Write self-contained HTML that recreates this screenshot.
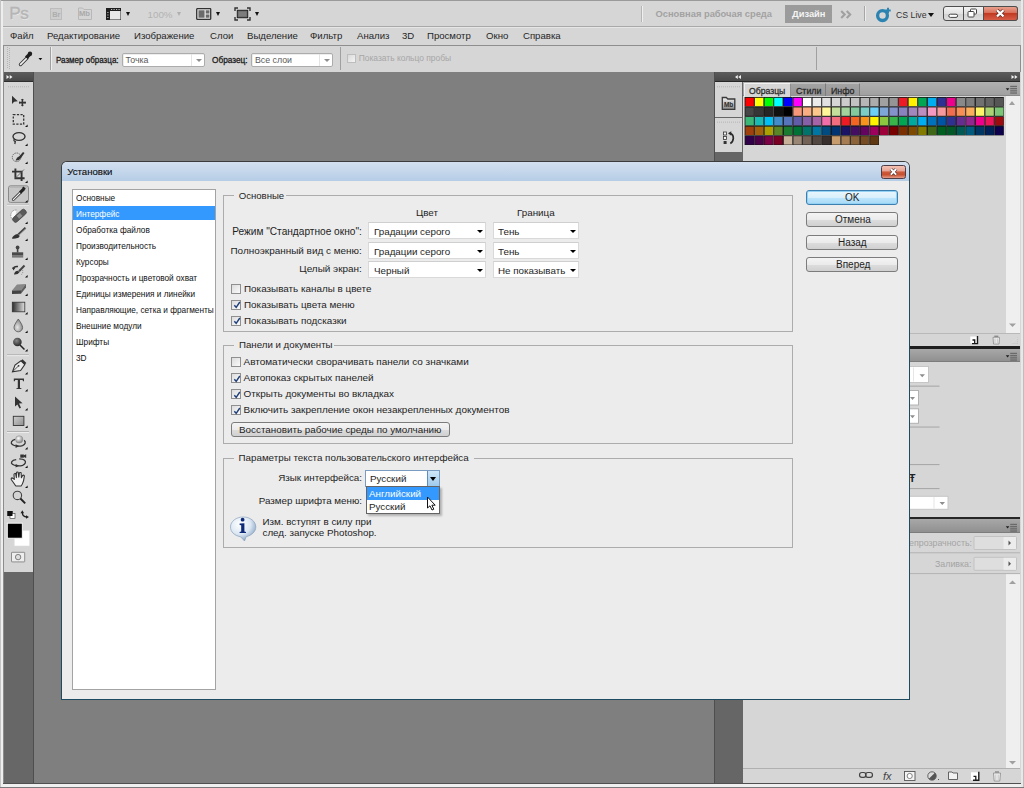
<!DOCTYPE html><html><head><meta charset="utf-8"><style>
*{margin:0;padding:0;box-sizing:border-box}
html,body{width:1024px;height:788px;overflow:hidden;background:#d6d6d6;font-family:"Liberation Sans",sans-serif;position:relative}
div{position:absolute}
.t{white-space:nowrap;line-height:1}

.grp{border:1px solid #acacac}
.dd{background:#fff;border:1px solid #d9d9d9;border-top-color:#cfcfcf}
.btn{background:linear-gradient(#f4f4f4,#ebebeb 50%,#dddddd 51%,#d0d0d0);border:1px solid #7c7c7c;border-radius:3px}
</style></head><body><div style="left:0px;top:0px;width:1024px;height:1px;background:#9a9a9a"></div>
<div style="left:0px;top:0px;width:1px;height:788px;background:#c4c4c4"></div>
<div style="left:1px;top:1px;width:2px;height:786px;background:#eeeeee"></div>
<div style="left:3px;top:45px;width:1px;height:738px;background:#8c8c8c"></div>
<div style="left:1021px;top:0px;width:3px;height:788px;background:#e8e8e8"></div>
<div style="left:1023px;top:0px;width:1px;height:788px;background:#bdbdbd"></div>
<div style="left:3px;top:26px;width:1018px;height:1px;background:#a9a9a9"></div>
<div style="left:3px;top:27px;width:1018px;height:1px;background:#e6e6e6"></div>
<div class="t" style="left:10px;top:30.6px;font-size:9.6px;color:#262626;font-weight:normal;">Файл</div>
<div class="t" style="left:47px;top:30.6px;font-size:9.6px;color:#262626;font-weight:normal;">Редактирование</div>
<div class="t" style="left:134px;top:30.6px;font-size:9.6px;color:#262626;font-weight:normal;">Изображение</div>
<div class="t" style="left:210px;top:30.6px;font-size:9.6px;color:#262626;font-weight:normal;">Слои</div>
<div class="t" style="left:247px;top:30.6px;font-size:9.6px;color:#262626;font-weight:normal;">Выделение</div>
<div class="t" style="left:310px;top:30.6px;font-size:9.6px;color:#262626;font-weight:normal;">Фильтр</div>
<div class="t" style="left:357px;top:30.6px;font-size:9.6px;color:#262626;font-weight:normal;">Анализ</div>
<div class="t" style="left:402px;top:30.6px;font-size:9.6px;color:#262626;font-weight:normal;">3D</div>
<div class="t" style="left:427px;top:30.6px;font-size:9.6px;color:#262626;font-weight:normal;">Просмотр</div>
<div class="t" style="left:486px;top:30.6px;font-size:9.6px;color:#262626;font-weight:normal;">Окно</div>
<div class="t" style="left:523px;top:30.6px;font-size:9.6px;color:#262626;font-weight:normal;">Справка</div>
<div style="left:3px;top:45px;width:1018px;height:1px;background:#8e8e8e"></div>
<div style="left:3px;top:45px;width:1px;height:27px;background:#8e8e8e"></div>
<div style="left:1020px;top:45px;width:1px;height:27px;background:#8e8e8e"></div>
<div style="left:50px;top:47px;width:1px;height:23px;background:#a0a0a0"></div>
<div style="left:51px;top:47px;width:1px;height:23px;background:#eeeeee"></div>
<div style="left:816px;top:47px;width:1px;height:23px;background:#a0a0a0"></div>
<div style="left:340px;top:47px;width:1px;height:23px;background:#a0a0a0"></div>
<div class="t" style="left:55.7px;top:55px;font-size:9.6px;color:#1a1a1a;font-weight:normal;transform:scaleX(0.835);transform-origin:0 0;-webkit-text-stroke:0.3px #1a1a1a">Размер образца:</div>
<div style="left:122px;top:52.5px;width:83px;height:14px;background:#fff;border:1px solid #acacac;border-radius:2px;box-shadow:inset 1px 1px 0 #ededed"></div>
<div style="left:190.5px;top:53.5px;width:1px;height:12px;background:#e4e4e4"></div>
<div style="left:196px;top:59.2px;width:0;height:0;border-left:3.0px solid transparent;border-right:3.0px solid transparent;border-top:3px solid #8e8e8e"></div>
<div class="t" style="left:125.5px;top:56px;font-size:8.8px;color:#5a5a5a;font-weight:normal;">Точка</div>
<div class="t" style="left:212.4px;top:55px;font-size:9.6px;color:#1a1a1a;font-weight:normal;transform:scaleX(0.86);transform-origin:0 0;-webkit-text-stroke:0.3px #1a1a1a">Образец:</div>
<div style="left:251px;top:52.5px;width:82px;height:14px;background:#fff;border:1px solid #acacac;border-radius:2px;box-shadow:inset 1px 1px 0 #ededed"></div>
<div style="left:318.5px;top:53.5px;width:1px;height:12px;background:#e4e4e4"></div>
<div style="left:324px;top:59.2px;width:0;height:0;border-left:3.0px solid transparent;border-right:3.0px solid transparent;border-top:3px solid #8e8e8e"></div>
<div class="t" style="left:255px;top:56px;font-size:8.8px;color:#5a5a5a;font-weight:normal;">Все слои</div>
<div style="left:347px;top:54px;width:9px;height:9px;background:linear-gradient(135deg,#dadada,#f4f4f4);border:1px solid #bdbdbd"></div>
<div class="t" style="left:358.7px;top:54.3px;font-size:8.45px;color:#a6a6a6;font-weight:normal;">Показать кольцо пробы</div>
<div style="left:4px;top:72px;width:30px;height:711px;background:#676767"></div>
<div style="left:33px;top:72px;width:1px;height:711px;background:#4e4e4e"></div>
<div style="left:34px;top:72px;width:680px;height:711px;background:#7f7f7f"></div>
<div style="left:714px;top:72px;width:1px;height:711px;background:#4e4e4e"></div>
<div style="left:715px;top:72px;width:28px;height:711px;background:#666666"></div>
<div style="left:3px;top:783px;width:1018px;height:1px;background:#505050"></div>
<div style="left:3px;top:784px;width:1018px;height:3px;background:#f0f0f0"></div>
<div style="left:0px;top:787px;width:1024px;height:1px;background:#7a7a7a"></div>
<div style="left:4px;top:72px;width:29px;height:10px;background:linear-gradient(#5c5c5c,#464646)"></div>
<div style="left:4px;top:81px;width:29px;height:1px;background:#2e2e2e"></div>
<div style="left:4px;top:82px;width:29px;height:490px;background:#d6d6d6"></div>
<div style="left:715px;top:72px;width:305px;height:10px;background:linear-gradient(#5c5c5c,#464646)"></div>
<div style="left:715px;top:81px;width:305px;height:1px;background:#262626"></div>
<div style="left:715px;top:82px;width:27px;height:35px;background:#d6d6d6"></div>
<div style="left:715px;top:118px;width:27px;height:34px;background:#d6d6d6"></div>
<div style="left:743px;top:82px;width:277px;height:264px;background:#d6d6d6"></div>
<div style="left:743px;top:82px;width:277px;height:14px;background:linear-gradient(#b0b0b0,#a0a0a0);border-bottom:1px solid #8a8a8a"></div>
<div style="left:744px;top:83px;width:47px;height:14px;background:#d6d6d6;border-top:1px solid #f2f2f2;border-left:1px solid #eeeeee;border-right:1px solid #8e8e8e"></div>
<div style="left:791px;top:83px;width:35px;height:13px;background:linear-gradient(#a3a3a3,#969696);border-right:1px solid #7c7c7c;border-top:1px solid #bdbdbd"></div>
<div style="left:826px;top:83px;width:34px;height:13px;background:linear-gradient(#a3a3a3,#969696);border-right:1px solid #7c7c7c;border-top:1px solid #bdbdbd"></div>
<div class="t" style="left:749px;top:85.8px;font-size:9.6px;color:#2a2a2a;font-weight:normal;transform:scaleX(0.9);transform-origin:0 0;-webkit-text-stroke:0.3px #2a2a2a">Образцы</div>
<div class="t" style="left:795.5px;top:85.8px;font-size:9.6px;color:#2a2a2a;font-weight:normal;transform:scaleX(0.92);transform-origin:0 0;-webkit-text-stroke:0.3px #2a2a2a">Стили</div>
<div class="t" style="left:831px;top:85.8px;font-size:9.6px;color:#2a2a2a;font-weight:normal;transform:scaleX(0.92);transform-origin:0 0;-webkit-text-stroke:0.3px #2a2a2a">Инфо</div>
<div style="left:1006px;top:96px;width:14px;height:237px;background:#efefef"></div>
<div style="left:743px;top:333px;width:277px;height:1px;background:#b9b9b9"></div>
<div style="left:743px;top:346px;width:277px;height:2.5px;background:#1e1e1e"></div>
<div style="left:743px;top:348.5px;width:277px;height:13.5px;background:linear-gradient(#a8a8a8,#909090);border-bottom:1px solid #7c7c7c"></div>
<div style="left:743px;top:362px;width:277px;height:155px;background:#d6d6d6"></div>
<div style="left:743px;top:517px;width:277px;height:2px;background:#262626"></div>
<div style="left:743px;top:519px;width:277px;height:14px;background:linear-gradient(#a8a8a8,#909090);border-bottom:1px solid #7c7c7c"></div>
<div style="left:743px;top:533px;width:277px;height:250px;background:#d6d6d6"></div>
<div style="left:1006px;top:574px;width:14px;height:194px;background:#efefef"></div>
<div style="left:743px;top:768px;width:277px;height:1px;background:#b0b0b0"></div>
<div class="t" style="left:9.2px;top:5px;font-size:17.2px;font-weight:normal;color:#b5b5b5;letter-spacing:-0.4px;-webkit-text-stroke:0.35px #b5b5b5;text-shadow:0.6px 0.6px 0 #e8e8e8">Ps</div>
<div style="left:50px;top:8px;width:12px;height:11.5px;background:#cdcdcd;border:1px solid #bcbcbc"></div>
<div class="t" style="left:52.2px;top:10.8px;font-size:7.5px;color:#aeaeae;font-weight:bold;">Br</div>
<svg style="position:absolute;left:77px;top:6px" width="17" height="15"><path d="M1.5 2 H5.5 L7 3.5 H14.5 V13.5 H1.5Z" fill="#d4d4d4" stroke="#b8b8b8" stroke-width="1"/></svg>
<div class="t" style="left:79.3px;top:9.5px;font-size:8px;color:#a9a9a9;font-weight:bold;transform:scaleX(0.95);transform-origin:0 0;">Mb</div>
<svg style="position:absolute;left:106px;top:8px" width="16" height="12" viewBox="0 0 16 12">
<rect x="0.5" y="0.5" width="14" height="11" fill="#fff" stroke="#1e1e1e" stroke-width="1"/>
<rect x="0" y="0" width="15" height="3" fill="#1e1e1e"/><rect x="0" y="0" width="4" height="12" fill="#1e1e1e"/>
<g fill="#bbb"><rect x="5" y="1" width="1.2" height="1"/><rect x="7.5" y="1" width="1.2" height="1"/><rect x="10" y="1" width="1.2" height="1"/><rect x="12.5" y="1" width="1.2" height="1"/>
<rect x="1.3" y="4" width="1.2" height="1"/><rect x="1.3" y="6.5" width="1.2" height="1"/><rect x="1.3" y="9" width="1.2" height="1"/></g>
<rect x="4" y="3" width="10.5" height="8.5" fill="#e8e8e8"/>
</svg>
<div style="left:125.5px;top:12px;width:0;height:0;border-left:2.8px solid transparent;border-right:2.8px solid transparent;border-top:4px solid #111"></div>
<div class="t" style="left:147.5px;top:10px;font-size:9.8px;color:#b3b3b3;font-weight:normal;">100%</div>
<div style="left:177px;top:12px;width:0;height:0;border-left:2.75px solid transparent;border-right:2.75px solid transparent;border-top:4px solid #b0b0b0"></div>
<svg style="position:absolute;left:196px;top:8px" width="16" height="12" viewBox="0 0 16 12">
<rect x="0.7" y="0.7" width="14" height="10.6" fill="#e4e4e4" stroke="#333" stroke-width="1.3" rx="0.5"/>
<rect x="2.5" y="2.3" width="6" height="7.4" fill="#6a6a6a"/>
<rect x="9.8" y="2.3" width="3.6" height="3.2" fill="#6a6a6a"/><rect x="9.8" y="6.5" width="3.6" height="3.2" fill="#6a6a6a"/>
</svg>
<div style="left:216px;top:12px;width:0;height:0;border-left:2.9px solid transparent;border-right:2.9px solid transparent;border-top:4px solid #111"></div>
<svg style="position:absolute;left:234px;top:7px" width="17" height="14" viewBox="0 0 17 14">
<path d="M1 4 V1 H4 M13 1 H16 V4 M16 10 V13 H13 M4 13 H1 V10" stroke="#333" stroke-width="1.4" fill="none"/>
<rect x="3.3" y="3.3" width="10.4" height="7.4" fill="#666" stroke="#222" stroke-width="1"/>
<rect x="4.5" y="4.5" width="8" height="5" fill="#7d7d7d"/>
</svg>
<div style="left:254.5px;top:12px;width:0;height:0;border-left:2.9px solid transparent;border-right:2.9px solid transparent;border-top:4px solid #111"></div>
<div style="left:641px;top:6px;width:1px;height:16px;background:#b5b5b5"></div>
<div style="left:642px;top:6px;width:1px;height:16px;background:#efefef"></div>
<div class="t" style="left:655.5px;top:10px;font-size:9.35px;color:#a2a2a2;font-weight:bold;">Основная рабочая среда</div>
<div style="left:785px;top:5px;width:47px;height:17.5px;background:#9b9b9b"></div>
<div class="t" style="left:792px;top:10px;font-size:9.35px;color:#f4f4f4;font-weight:bold;">Дизайн</div>
<svg style="position:absolute;left:840px;top:10px" width="13" height="9"><path d="M1.2 1 L4.7 4.5 L1.2 8 M6.7 1 L10.2 4.5 L6.7 8" stroke="#a0a0a0" stroke-width="2.1" fill="none"/></svg>
<div style="left:864px;top:6px;width:1px;height:15px;background:#a6a6a6"></div>
<div style="left:865px;top:6px;width:1px;height:15px;background:#ededed"></div>
<svg style="position:absolute;left:875px;top:7px" width="16" height="16" viewBox="0 0 16 16">
<circle cx="7.5" cy="8.6" r="4.9" fill="none" stroke="#2a83b0" stroke-width="3.3"/>
<path d="M13 0.8 V6.2 M10.3 3.5 H15.7" stroke="#2a83b0" stroke-width="1.9"/>
</svg>
<div class="t" style="left:895.5px;top:9.8px;font-size:9.8px;color:#333;font-weight:normal;transform:scaleX(0.89);transform-origin:0 0;">CS Live</div>
<div style="left:927.8px;top:13px;width:0;height:0;border-left:3.5px solid transparent;border-right:3.5px solid transparent;border-top:4px solid #111"></div>
<svg style="position:absolute;left:943px;top:6px" width="75" height="15" viewBox="0 0 75 15">
<defs>
<linearGradient id="wg" x1="0" y1="0" x2="0" y2="1"><stop offset="0" stop-color="#f4f4f4"/><stop offset="0.5" stop-color="#e2e2e2"/><stop offset="0.51" stop-color="#d2d2d2"/><stop offset="1" stop-color="#dedede"/></linearGradient>
<linearGradient id="rg" x1="0" y1="0" x2="0" y2="1"><stop offset="0" stop-color="#eaa493"/><stop offset="0.45" stop-color="#d9705a"/><stop offset="0.5" stop-color="#c23a22"/><stop offset="1" stop-color="#d8604a"/></linearGradient>
</defs>
<rect x="0.5" y="0.5" width="74" height="14" rx="2.5" fill="url(#wg)" stroke="#4e4e4e"/>
<path d="M40.5 0.5 H72 A2.5 2.5 0 0 1 74.5 3 V12 A2.5 2.5 0 0 1 72 14.5 H40.5Z" fill="url(#rg)" stroke="#4e4e4e"/>
<line x1="20.5" y1="1" x2="20.5" y2="14" stroke="#4e4e4e"/>
<rect x="5.8" y="8.2" width="8.8" height="3.2" rx="1.6" fill="#fff" stroke="#444"/>
<rect x="27.5" y="3" width="6" height="5" fill="#fff" stroke="#444" rx="0.8"/>
<rect x="25" y="5.5" width="6" height="5.5" fill="#fff" stroke="#444" rx="0.8"/>
<path d="M54 4.2 L60.5 10.4 M60.5 4.2 L54 10.4" stroke="#5a2a20" stroke-width="3.6"/>
<path d="M54 4.2 L60.5 10.4 M60.5 4.2 L54 10.4" stroke="#fff" stroke-width="2.2"/>
</svg>
<svg style="position:absolute;left:0px;top:44px" width="50" height="28" viewBox="0 0 50 28">
<g fill="#b4b4b4"><rect x="7" y="3" width="1" height="1"/><rect x="9" y="4" width="1" height="1"/><rect x="7" y="5" width="1" height="1"/><rect x="9" y="6" width="1" height="1"/><rect x="7" y="7" width="1" height="1"/><rect x="9" y="8" width="1" height="1"/><rect x="7" y="9" width="1" height="1"/><rect x="9" y="10" width="1" height="1"/><rect x="7" y="11" width="1" height="1"/><rect x="9" y="12" width="1" height="1"/><rect x="7" y="13" width="1" height="1"/><rect x="9" y="14" width="1" height="1"/><rect x="7" y="15" width="1" height="1"/><rect x="9" y="16" width="1" height="1"/><rect x="7" y="17" width="1" height="1"/><rect x="9" y="18" width="1" height="1"/><rect x="7" y="19" width="1" height="1"/><rect x="9" y="20" width="1" height="1"/><rect x="7" y="21" width="1" height="1"/><rect x="9" y="22" width="1" height="1"/><rect x="7" y="23" width="1" height="1"/><rect x="9" y="24" width="1" height="1"/></g>
<path d="M20.5 20.5 L27 14" stroke="#3a3a3a" stroke-width="3.4" stroke-linecap="round"/>
<path d="M20.6 20.4 L26.5 14.5" stroke="#f0f0f0" stroke-width="1.7" stroke-linecap="round"/>
<path d="M25 12.5 L28.8 8.7 L31.3 11.2 L27.5 15Z" fill="#1e1e1e"/>
<circle cx="30" cy="9.8" r="2.2" fill="#1e1e1e"/>
<path d="M38.5 14 L42.3 14 L40.4 16.2Z" fill="#111"/>
</svg>
<svg style="position:absolute;left:0;top:0" width="40" height="600" viewBox="0 0 40 600"><g fill="#bdbdbd"><rect x="8" y="86" width="1" height="1.4"/><rect x="10" y="86" width="1" height="1.4"/><rect x="12" y="86" width="1" height="1.4"/><rect x="14" y="86" width="1" height="1.4"/><rect x="16" y="86" width="1" height="1.4"/><rect x="18" y="86" width="1" height="1.4"/><rect x="20" y="86" width="1" height="1.4"/><rect x="22" y="86" width="1" height="1.4"/><rect x="24" y="86" width="1" height="1.4"/><rect x="26" y="86" width="1" height="1.4"/><rect x="28" y="86" width="1" height="1.4"/></g><path d="M12 95.8 L12 104 L14.2 101.8 L17.8 101.2Z" fill="#333"/><path d="M22.4 99 V106 M19 102.6 H25.8" stroke="#333" stroke-width="1.6"/><path d="M21 100 L22.4 98.8 L23.8 100Z M21 105.2 L22.4 106.4 L23.8 105.2Z M20 101.2 L18.8 102.6 L20 104Z M24.8 101.2 L26 102.6 L24.8 104Z" fill="#333"/><rect x="13.3" y="114.6" width="10.4" height="9.6" fill="none" stroke="#333" stroke-width="1.3" stroke-dasharray="2.2 1.4"/><path d="M27.6 127 V124.4 L25 127Z" fill="#111"/><ellipse cx="19" cy="136.5" rx="6" ry="3.9" fill="none" stroke="#333" stroke-width="1.4"/><path d="M14.5 139 Q13 141 15.3 141.5 L14.8 144" fill="none" stroke="#333" stroke-width="1.3"/><path d="M27.6 146 V143.4 L25 146Z" fill="#111"/><circle cx="16.6" cy="157.3" r="4.3" fill="none" stroke="#555" stroke-width="1" stroke-dasharray="1.2 1"/><path d="M15.5 160.5 Q19 161 21 158 L24.5 153 L23 152 L19.5 156 Q16.5 157 15.5 160.5Z" fill="#333"/><path d="M27.6 164 V161.4 L25 164Z" fill="#111"/><path d="M15.4 168.6 V178.2 H24.6 M12 171.6 H21.6 V181" fill="none" stroke="#333" stroke-width="1.9"/><path d="M15.5 178 L24 169.5" stroke="#555" stroke-width="0.8"/><path d="M27.6 183 V180.4 L25 183Z" fill="#111"/><rect x="8.5" y="185.8" width="20" height="16.6" rx="2" fill="#c6c6c6" stroke="#8a8a8a"/><rect x="9.5" y="186.8" width="18" height="1" fill="#b4b4b4"/><path d="M13.3 199.6 L20.5 192.4" stroke="#333" stroke-width="2.8" stroke-linecap="round"/><path d="M13.3 199.6 L20.5 192.4" stroke="#f2f2f2" stroke-width="1.3" stroke-linecap="round"/><path d="M19 191.5 L22.8 187.8 L25 190 L21.2 193.8Z M22 188 L23.5 186.5 L25.8 188.8 L24.3 190.3Z" fill="#222"/><path d="M27.6 202.5 V199.9 L25 202.5Z" fill="#111"/><rect x="7" y="203.8" width="22" height="1" fill="#b2b2b2"/><rect x="7" y="204.8" width="22" height="1" fill="#ececec"/><path d="M16.5 210 Q11 210 10.8 215.5 Q11 219.5 14.5 220" fill="#fafafa" stroke="#777" stroke-width="0.8" stroke-dasharray="1.1 0.9"/><rect x="11.5" y="213" width="16" height="5.6" rx="2.2" transform="rotate(-42 19.5 215.8)" fill="#5a5a5a" stroke="#3a3a3a" stroke-width="0.6"/><rect x="17.3" y="213.9" width="4.4" height="3.8" transform="rotate(-42 19.5 215.8)" fill="#8e8e8e"/><path d="M27.6 224 V221.4 L25 224Z" fill="#111"/><path d="M11.8 238.6 Q13.5 234.5 17.5 234 L19.8 236 Q18 239 11.8 238.6Z" fill="#333"/><path d="M18.3 234.5 L25.5 227.8" stroke="#444" stroke-width="2.2"/><path d="M19 235 L25.8 228.5" stroke="#999" stroke-width="0.8"/><path d="M27.6 241 V238.4 L25 241Z" fill="#111"/><circle cx="17.6" cy="247.4" r="1.9" fill="#444"/><rect x="16.8" y="248.5" width="1.6" height="4" fill="#444"/><rect x="12" y="252.3" width="11.2" height="3.3" fill="#4a4a4a"/><rect x="12" y="255.6" width="11.2" height="2" fill="#777"/><path d="M27.6 260 V257.4 L25 260Z" fill="#111"/><path d="M14 274.5 Q14.5 271 18 270.8 L19.5 272.3 Q18 274.8 14 274.5Z" fill="#333"/><path d="M19 271.2 L24.5 265.5" stroke="#444" stroke-width="2"/><path d="M13 269 Q14 266 18 266.5" fill="none" stroke="#333" stroke-width="1.5"/><path d="M12 267.5 L13.5 270.5 L15.2 268Z" fill="#333"/><path d="M22.5 270 Q23.5 273 21 275" fill="none" stroke="#777" stroke-width="0.8" stroke-dasharray="1 1"/><path d="M27.6 277.5 V274.9 L25 277.5Z" fill="#111"/><path d="M12 290.5 L17 284.5 L26 284 L21 290.2Z" fill="#888"/><path d="M12 290.5 L21 290.2 L21 293.7 L12 294Z" fill="#444"/><path d="M21 290.2 L26 284 L26 287.5 L21 293.7Z" fill="#5e5e5e"/><path d="M27.6 296 V293.4 L25 296Z" fill="#111"/><defs><linearGradient id="gr1" x1="0" x2="1"><stop offset="0" stop-color="#2d2d2d"/><stop offset="1" stop-color="#e0e0e0"/></linearGradient><radialGradient id="drop" cx="0.4" cy="0.65" r="0.6"><stop offset="0" stop-color="#e6e6e6"/><stop offset="1" stop-color="#8a8a8a"/></radialGradient><radialGradient id="ball" cx="0.4" cy="0.35" r="0.6"><stop offset="0" stop-color="#888"/><stop offset="1" stop-color="#2f2f2f"/></radialGradient><radialGradient id="sph" cx="0.4" cy="0.35" r="0.6"><stop offset="0" stop-color="#fff"/><stop offset="1" stop-color="#8c8c8c"/></radialGradient><linearGradient id="rectg" x1="0" y1="0" x2="1" y2="1"><stop offset="0" stop-color="#cfcfcf"/><stop offset="1" stop-color="#8f8f8f"/></linearGradient></defs><rect x="12.3" y="302.2" width="12.5" height="9.6" fill="url(#gr1)" stroke="#333" stroke-width="0.8"/><path d="M27.6 314.5 V311.9 L25 314.5Z" fill="#111"/><path d="M18.3 319 Q14 325 14 327.5 A4.3 4.3 0 0 0 22.6 327.5 Q22.6 325 18.3 319Z" fill="url(#drop)" stroke="#555" stroke-width="0.8"/><path d="M27.6 333 V330.4 L25 333Z" fill="#111"/><circle cx="17.4" cy="342" r="4.3" fill="url(#ball)"/><path d="M20 345 L24.5 349.5" stroke="#222" stroke-width="1.5"/><path d="M27.6 351.5 V348.9 L25 351.5Z" fill="#111"/><rect x="7" y="354.2" width="22" height="1" fill="#b2b2b2"/><rect x="7" y="355.2" width="22" height="1" fill="#ececec"/><path d="M12.5 371.8 L15 365 L21 360.8 L24.8 364.6 L20.6 370.6Z" fill="#eaeaea" stroke="#333" stroke-width="1.1"/><path d="M21 360.8 L22.5 359.2 L26.4 363 L24.8 364.6Z" fill="#333"/><path d="M12.8 371.5 L18.4 366" stroke="#333" stroke-width="0.8"/><circle cx="18.6" cy="365.8" r="0.9" fill="#333"/><path d="M27.6 374.5 V371.9 L25 374.5Z" fill="#111"/><path d="M13.8 378.6 H24 V381.2 H23 L22.6 380 H20 V388 L21.4 388.3 V389 H16.4 V388.3 L17.8 388 V380 H15.2 L14.8 381.2 H13.8Z" fill="#333"/><path d="M27.6 391.5 V388.9 L25 391.5Z" fill="#111"/><path d="M15 396.6 L15 406.5 L17.4 404.4 L19.5 408.5 L21 407.7 L19 403.6 L22.5 403.2Z" fill="#333"/><path d="M27.6 410.5 V407.9 L25 410.5Z" fill="#111"/><rect x="13.3" y="416.3" width="10.6" height="9.2" fill="url(#rectg)" stroke="#333" stroke-width="0.9"/><path d="M27.6 428 V425.4 L25 428Z" fill="#111"/><rect x="7" y="431" width="22" height="1" fill="#b2b2b2"/><rect x="7" y="432" width="22" height="1" fill="#ececec"/><path d="M15.3 439.3 C11.3 440.3 10.3 443 12.3 444.6 C14.5 446.3 19.5 446.7 22.5 445.6 C25.3 444.5 26.2 442.3 24.2 440.3" fill="none" stroke="#333" stroke-width="1.3"/><circle cx="19.2" cy="439.4" r="3.7" fill="url(#sph)" stroke="#8a8a8a" stroke-width="0.5"/><path d="M15.6 444.2 L19.2 446.1 L15.6 447.9Z" fill="#333"/><path d="M27.6 449.5 V446.9 L25 449.5Z" fill="#111"/><rect x="20.3" y="454.5" width="3.6" height="3.2" fill="#333"/><path d="M23.9 455.3 L26.2 454.3 V458 L23.9 457Z" fill="#333"/><path d="M16.2 459.6 C11.6 460.2 10.4 462.7 12.4 464.3 C14.6 466 19.6 466.3 22.6 465.3 C25.4 464.2 26.3 462 24.6 460.2 C23.6 459.2 21.4 458.8 19.2 458.8" fill="none" stroke="#333" stroke-width="1.3"/><path d="M15.6 463.9 L19.2 465.8 L15.6 467.6Z" fill="#333"/><path d="M27.6 468 V465.4 L25 468Z" fill="#111"/><path d="M14.6 484.3 L11.4 479.7 Q10.7 478.1 12.3 477.9 L14.3 479.4 L14 474.6 Q14.2 473.2 15.6 473.6 L16.4 477.6 L16.4 472.9 Q16.9 471.6 18.1 472.2 L18.8 477.1 L19.3 473.1 Q19.9 472 21.1 472.8 L21.4 477.7 L22.6 475.4 Q23.6 474.8 24.4 475.9 L23.6 480.6 Q22.6 484.1 21.1 486 L15.9 486Z" fill="#f0f0f0" stroke="#333" stroke-width="1.1" stroke-linejoin="round"/><path d="M27.6 488 V485.4 L25 488Z" fill="#111"/><circle cx="17.4" cy="495.4" r="4.2" fill="#d4d4d4" stroke="#444" stroke-width="1.1"/><path d="M20.4 498.5 L25.2 503.3" stroke="#222" stroke-width="1.9"/><rect x="7.5" y="511" width="5" height="5" fill="#111"/><rect x="10" y="513.5" width="5" height="5" fill="#fff" stroke="#333" stroke-width="0.6"/><rect x="7.5" y="511" width="5" height="5" fill="#111"/><path d="M22.3 512.5 Q22.5 516.8 26.8 517" fill="none" stroke="#222" stroke-width="1.3"/><path d="M20.5 513.3 L22.3 510.3 L24.1 513.3Z M26 515.2 L29 517 L26 518.8Z" fill="#222"/><rect x="14.2" y="530.3" width="15.5" height="15.7" fill="#fff" stroke="#dedede" stroke-width="0.6"/><rect x="7.3" y="523.2" width="15" height="15" fill="#000" stroke="#fff" stroke-width="0.9"/><rect x="11.5" y="552.3" width="13.2" height="9.6" rx="0.5" fill="#eee" stroke="#777" stroke-width="0.8"/><circle cx="18.1" cy="557.1" r="2.7" fill="#ddd" stroke="#666" stroke-width="0.8"/></svg>
<svg style="position:absolute;left:0;top:0" width="1024" height="160" viewBox="0 0 1024 160"><g fill="#bdbdbd"><rect x="717" y="86" width="1" height="1.4"/><rect x="717" y="121.5" width="1" height="1.4"/><rect x="719" y="86" width="1" height="1.4"/><rect x="719" y="121.5" width="1" height="1.4"/><rect x="721" y="86" width="1" height="1.4"/><rect x="721" y="121.5" width="1" height="1.4"/><rect x="723" y="86" width="1" height="1.4"/><rect x="723" y="121.5" width="1" height="1.4"/><rect x="725" y="86" width="1" height="1.4"/><rect x="725" y="121.5" width="1" height="1.4"/><rect x="727" y="86" width="1" height="1.4"/><rect x="727" y="121.5" width="1" height="1.4"/><rect x="729" y="86" width="1" height="1.4"/><rect x="729" y="121.5" width="1" height="1.4"/><rect x="731" y="86" width="1" height="1.4"/><rect x="731" y="121.5" width="1" height="1.4"/><rect x="733" y="86" width="1" height="1.4"/><rect x="733" y="121.5" width="1" height="1.4"/><rect x="735" y="86" width="1" height="1.4"/><rect x="735" y="121.5" width="1" height="1.4"/><rect x="737" y="86" width="1" height="1.4"/><rect x="737" y="121.5" width="1" height="1.4"/><rect x="739" y="86" width="1" height="1.4"/><rect x="739" y="121.5" width="1" height="1.4"/></g><defs><linearGradient id="mbg" x1="0" y1="0" x2="0" y2="1"><stop offset="0" stop-color="#f4f4f4"/><stop offset="1" stop-color="#8a8a8a"/></linearGradient></defs><path d="M722.3 97.5 H726.3 L727.8 99 H734.8 V109.3 H722.3Z" fill="url(#mbg)" stroke="#3a3a3a" stroke-width="1.3"/><rect x="723.6" y="132" width="3" height="3" fill="#f4f4f4" stroke="#333" stroke-width="0.8"/><rect x="723.6" y="136.5" width="3" height="3" fill="#f4f4f4" stroke="#333" stroke-width="0.8"/><rect x="723.6" y="141" width="3" height="3" fill="#333"/><path d="M730 133.5 Q733.5 134 733.3 138.5 Q733 142 730.3 143.5" fill="none" stroke="#2a2a2a" stroke-width="1.7"/><path d="M728 133.3 L731.3 131.2 L731.3 135.8Z" fill="#2a2a2a"/></svg>
<div class="t" style="left:723.6px;top:101.3px;font-size:7px;color:#2a2a2a;font-weight:bold;transform:scaleX(0.92);transform-origin:0 0;">Mb</div>
<svg style="position:absolute;left:0;top:0" width="1024" height="160" viewBox="0 0 1024 160"><rect x="744.60" y="97.00" width="9.60" height="9.60" fill="#161616"/><rect x="745.40" y="97.80" width="8.40" height="8.40" fill="#ff0000"/><rect x="754.20" y="97.00" width="9.60" height="9.60" fill="#161616"/><rect x="755.00" y="97.80" width="8.40" height="8.40" fill="#ffff00"/><rect x="763.80" y="97.00" width="9.60" height="9.60" fill="#161616"/><rect x="764.60" y="97.80" width="8.40" height="8.40" fill="#00ff00"/><rect x="773.40" y="97.00" width="9.60" height="9.60" fill="#161616"/><rect x="774.20" y="97.80" width="8.40" height="8.40" fill="#00ffff"/><rect x="783.00" y="97.00" width="9.60" height="9.60" fill="#161616"/><rect x="783.80" y="97.80" width="8.40" height="8.40" fill="#0000ff"/><rect x="792.60" y="97.00" width="9.60" height="9.60" fill="#161616"/><rect x="793.40" y="97.80" width="8.40" height="8.40" fill="#ff00ff"/><rect x="802.20" y="97.00" width="9.60" height="9.60" fill="#161616"/><rect x="803.00" y="97.80" width="8.40" height="8.40" fill="#ffffff"/><rect x="811.80" y="97.00" width="9.60" height="9.60" fill="#161616"/><rect x="812.60" y="97.80" width="8.40" height="8.40" fill="#ebebeb"/><rect x="821.40" y="97.00" width="9.60" height="9.60" fill="#161616"/><rect x="822.20" y="97.80" width="8.40" height="8.40" fill="#e1e1e1"/><rect x="831.00" y="97.00" width="9.60" height="9.60" fill="#161616"/><rect x="831.80" y="97.80" width="8.40" height="8.40" fill="#d6d6d6"/><rect x="840.60" y="97.00" width="9.60" height="9.60" fill="#161616"/><rect x="841.40" y="97.80" width="8.40" height="8.40" fill="#cccccc"/><rect x="850.20" y="97.00" width="9.60" height="9.60" fill="#161616"/><rect x="851.00" y="97.80" width="8.40" height="8.40" fill="#c2c2c2"/><rect x="859.80" y="97.00" width="9.60" height="9.60" fill="#161616"/><rect x="860.60" y="97.80" width="8.40" height="8.40" fill="#b7b7b7"/><rect x="869.40" y="97.00" width="9.60" height="9.60" fill="#161616"/><rect x="870.20" y="97.80" width="8.40" height="8.40" fill="#acacac"/><rect x="879.00" y="97.00" width="9.60" height="9.60" fill="#161616"/><rect x="879.80" y="97.80" width="8.40" height="8.40" fill="#a1a1a1"/><rect x="888.60" y="97.00" width="9.60" height="9.60" fill="#161616"/><rect x="889.40" y="97.80" width="8.40" height="8.40" fill="#959595"/><rect x="898.20" y="97.00" width="9.60" height="9.60" fill="#161616"/><rect x="899.00" y="97.80" width="8.40" height="8.40" fill="#ed1c24"/><rect x="907.80" y="97.00" width="9.60" height="9.60" fill="#161616"/><rect x="908.60" y="97.80" width="8.40" height="8.40" fill="#fff200"/><rect x="917.40" y="97.00" width="9.60" height="9.60" fill="#161616"/><rect x="918.20" y="97.80" width="8.40" height="8.40" fill="#00a651"/><rect x="927.00" y="97.00" width="9.60" height="9.60" fill="#161616"/><rect x="927.80" y="97.80" width="8.40" height="8.40" fill="#00aeef"/><rect x="936.60" y="97.00" width="9.60" height="9.60" fill="#161616"/><rect x="937.40" y="97.80" width="8.40" height="8.40" fill="#2e3192"/><rect x="946.20" y="97.00" width="9.60" height="9.60" fill="#161616"/><rect x="947.00" y="97.80" width="8.40" height="8.40" fill="#ec008c"/><rect x="955.80" y="97.00" width="9.60" height="9.60" fill="#161616"/><rect x="956.60" y="97.80" width="8.40" height="8.40" fill="#898989"/><rect x="965.40" y="97.00" width="9.60" height="9.60" fill="#161616"/><rect x="966.20" y="97.80" width="8.40" height="8.40" fill="#7d7d7d"/><rect x="975.00" y="97.00" width="9.60" height="9.60" fill="#161616"/><rect x="975.80" y="97.80" width="8.40" height="8.40" fill="#707070"/><rect x="984.60" y="97.00" width="9.60" height="9.60" fill="#161616"/><rect x="985.40" y="97.80" width="8.40" height="8.40" fill="#636363"/><rect x="994.20" y="97.00" width="9.60" height="9.60" fill="#161616"/><rect x="995.00" y="97.80" width="8.40" height="8.40" fill="#555555"/><rect x="744.60" y="106.60" width="9.60" height="9.60" fill="#161616"/><rect x="745.40" y="107.40" width="8.40" height="8.40" fill="#464646"/><rect x="754.20" y="106.60" width="9.60" height="9.60" fill="#161616"/><rect x="755.00" y="107.40" width="8.40" height="8.40" fill="#363636"/><rect x="763.80" y="106.60" width="9.60" height="9.60" fill="#161616"/><rect x="764.60" y="107.40" width="8.40" height="8.40" fill="#262626"/><rect x="773.40" y="106.60" width="9.60" height="9.60" fill="#161616"/><rect x="774.20" y="107.40" width="8.40" height="8.40" fill="#111111"/><rect x="783.00" y="106.60" width="9.60" height="9.60" fill="#161616"/><rect x="783.80" y="107.40" width="8.40" height="8.40" fill="#000000"/><rect x="792.60" y="106.60" width="9.60" height="9.60" fill="#161616"/><rect x="793.40" y="107.40" width="8.40" height="8.40" fill="#f7977a"/><rect x="802.20" y="106.60" width="9.60" height="9.60" fill="#161616"/><rect x="803.00" y="107.40" width="8.40" height="8.40" fill="#f9ad81"/><rect x="811.80" y="106.60" width="9.60" height="9.60" fill="#161616"/><rect x="812.60" y="107.40" width="8.40" height="8.40" fill="#fdc68a"/><rect x="821.40" y="106.60" width="9.60" height="9.60" fill="#161616"/><rect x="822.20" y="107.40" width="8.40" height="8.40" fill="#fff79a"/><rect x="831.00" y="106.60" width="9.60" height="9.60" fill="#161616"/><rect x="831.80" y="107.40" width="8.40" height="8.40" fill="#c4df9b"/><rect x="840.60" y="106.60" width="9.60" height="9.60" fill="#161616"/><rect x="841.40" y="107.40" width="8.40" height="8.40" fill="#a3d39c"/><rect x="850.20" y="106.60" width="9.60" height="9.60" fill="#161616"/><rect x="851.00" y="107.40" width="8.40" height="8.40" fill="#82ca9d"/><rect x="859.80" y="106.60" width="9.60" height="9.60" fill="#161616"/><rect x="860.60" y="107.40" width="8.40" height="8.40" fill="#7bcdc8"/><rect x="869.40" y="106.60" width="9.60" height="9.60" fill="#161616"/><rect x="870.20" y="107.40" width="8.40" height="8.40" fill="#6ecff6"/><rect x="879.00" y="106.60" width="9.60" height="9.60" fill="#161616"/><rect x="879.80" y="107.40" width="8.40" height="8.40" fill="#7ea7d8"/><rect x="888.60" y="106.60" width="9.60" height="9.60" fill="#161616"/><rect x="889.40" y="107.40" width="8.40" height="8.40" fill="#8493ca"/><rect x="898.20" y="106.60" width="9.60" height="9.60" fill="#161616"/><rect x="899.00" y="107.40" width="8.40" height="8.40" fill="#8882be"/><rect x="907.80" y="106.60" width="9.60" height="9.60" fill="#161616"/><rect x="908.60" y="107.40" width="8.40" height="8.40" fill="#a187be"/><rect x="917.40" y="106.60" width="9.60" height="9.60" fill="#161616"/><rect x="918.20" y="107.40" width="8.40" height="8.40" fill="#bc8dbf"/><rect x="927.00" y="106.60" width="9.60" height="9.60" fill="#161616"/><rect x="927.80" y="107.40" width="8.40" height="8.40" fill="#f49ac2"/><rect x="936.60" y="106.60" width="9.60" height="9.60" fill="#161616"/><rect x="937.40" y="107.40" width="8.40" height="8.40" fill="#f6989d"/><rect x="946.20" y="106.60" width="9.60" height="9.60" fill="#161616"/><rect x="947.00" y="107.40" width="8.40" height="8.40" fill="#f26c4f"/><rect x="955.80" y="106.60" width="9.60" height="9.60" fill="#161616"/><rect x="956.60" y="107.40" width="8.40" height="8.40" fill="#f68e55"/><rect x="965.40" y="106.60" width="9.60" height="9.60" fill="#161616"/><rect x="966.20" y="107.40" width="8.40" height="8.40" fill="#fbaf5c"/><rect x="975.00" y="106.60" width="9.60" height="9.60" fill="#161616"/><rect x="975.80" y="107.40" width="8.40" height="8.40" fill="#fff467"/><rect x="984.60" y="106.60" width="9.60" height="9.60" fill="#161616"/><rect x="985.40" y="107.40" width="8.40" height="8.40" fill="#acd372"/><rect x="994.20" y="106.60" width="9.60" height="9.60" fill="#161616"/><rect x="995.00" y="107.40" width="8.40" height="8.40" fill="#7cc576"/><rect x="744.60" y="116.20" width="9.60" height="9.60" fill="#161616"/><rect x="745.40" y="117.00" width="8.40" height="8.40" fill="#3bb878"/><rect x="754.20" y="116.20" width="9.60" height="9.60" fill="#161616"/><rect x="755.00" y="117.00" width="8.40" height="8.40" fill="#1abbb4"/><rect x="763.80" y="116.20" width="9.60" height="9.60" fill="#161616"/><rect x="764.60" y="117.00" width="8.40" height="8.40" fill="#00bff3"/><rect x="773.40" y="116.20" width="9.60" height="9.60" fill="#161616"/><rect x="774.20" y="117.00" width="8.40" height="8.40" fill="#438cca"/><rect x="783.00" y="116.20" width="9.60" height="9.60" fill="#161616"/><rect x="783.80" y="117.00" width="8.40" height="8.40" fill="#5574b9"/><rect x="792.60" y="116.20" width="9.60" height="9.60" fill="#161616"/><rect x="793.40" y="117.00" width="8.40" height="8.40" fill="#605ca8"/><rect x="802.20" y="116.20" width="9.60" height="9.60" fill="#161616"/><rect x="803.00" y="117.00" width="8.40" height="8.40" fill="#855fa8"/><rect x="811.80" y="116.20" width="9.60" height="9.60" fill="#161616"/><rect x="812.60" y="117.00" width="8.40" height="8.40" fill="#a763a8"/><rect x="821.40" y="116.20" width="9.60" height="9.60" fill="#161616"/><rect x="822.20" y="117.00" width="8.40" height="8.40" fill="#f06eaa"/><rect x="831.00" y="116.20" width="9.60" height="9.60" fill="#161616"/><rect x="831.80" y="117.00" width="8.40" height="8.40" fill="#f26d7d"/><rect x="840.60" y="116.20" width="9.60" height="9.60" fill="#161616"/><rect x="841.40" y="117.00" width="8.40" height="8.40" fill="#ed1c24"/><rect x="850.20" y="116.20" width="9.60" height="9.60" fill="#161616"/><rect x="851.00" y="117.00" width="8.40" height="8.40" fill="#f26522"/><rect x="859.80" y="116.20" width="9.60" height="9.60" fill="#161616"/><rect x="860.60" y="117.00" width="8.40" height="8.40" fill="#f7941d"/><rect x="869.40" y="116.20" width="9.60" height="9.60" fill="#161616"/><rect x="870.20" y="117.00" width="8.40" height="8.40" fill="#fff200"/><rect x="879.00" y="116.20" width="9.60" height="9.60" fill="#161616"/><rect x="879.80" y="117.00" width="8.40" height="8.40" fill="#8dc63f"/><rect x="888.60" y="116.20" width="9.60" height="9.60" fill="#161616"/><rect x="889.40" y="117.00" width="8.40" height="8.40" fill="#39b54a"/><rect x="898.20" y="116.20" width="9.60" height="9.60" fill="#161616"/><rect x="899.00" y="117.00" width="8.40" height="8.40" fill="#00a651"/><rect x="907.80" y="116.20" width="9.60" height="9.60" fill="#161616"/><rect x="908.60" y="117.00" width="8.40" height="8.40" fill="#00a99d"/><rect x="917.40" y="116.20" width="9.60" height="9.60" fill="#161616"/><rect x="918.20" y="117.00" width="8.40" height="8.40" fill="#00aeef"/><rect x="927.00" y="116.20" width="9.60" height="9.60" fill="#161616"/><rect x="927.80" y="117.00" width="8.40" height="8.40" fill="#0072bc"/><rect x="936.60" y="116.20" width="9.60" height="9.60" fill="#161616"/><rect x="937.40" y="117.00" width="8.40" height="8.40" fill="#0054a6"/><rect x="946.20" y="116.20" width="9.60" height="9.60" fill="#161616"/><rect x="947.00" y="117.00" width="8.40" height="8.40" fill="#2e3192"/><rect x="955.80" y="116.20" width="9.60" height="9.60" fill="#161616"/><rect x="956.60" y="117.00" width="8.40" height="8.40" fill="#662d91"/><rect x="965.40" y="116.20" width="9.60" height="9.60" fill="#161616"/><rect x="966.20" y="117.00" width="8.40" height="8.40" fill="#92278f"/><rect x="975.00" y="116.20" width="9.60" height="9.60" fill="#161616"/><rect x="975.80" y="117.00" width="8.40" height="8.40" fill="#ec008c"/><rect x="984.60" y="116.20" width="9.60" height="9.60" fill="#161616"/><rect x="985.40" y="117.00" width="8.40" height="8.40" fill="#ed145b"/><rect x="994.20" y="116.20" width="9.60" height="9.60" fill="#161616"/><rect x="995.00" y="117.00" width="8.40" height="8.40" fill="#9e0b0f"/><rect x="744.60" y="125.80" width="9.60" height="9.60" fill="#161616"/><rect x="745.40" y="126.60" width="8.40" height="8.40" fill="#a0410d"/><rect x="754.20" y="125.80" width="9.60" height="9.60" fill="#161616"/><rect x="755.00" y="126.60" width="8.40" height="8.40" fill="#a36209"/><rect x="763.80" y="125.80" width="9.60" height="9.60" fill="#161616"/><rect x="764.60" y="126.60" width="8.40" height="8.40" fill="#aba000"/><rect x="773.40" y="125.80" width="9.60" height="9.60" fill="#161616"/><rect x="774.20" y="126.60" width="8.40" height="8.40" fill="#598527"/><rect x="783.00" y="125.80" width="9.60" height="9.60" fill="#161616"/><rect x="783.80" y="126.60" width="8.40" height="8.40" fill="#1a7b30"/><rect x="792.60" y="125.80" width="9.60" height="9.60" fill="#161616"/><rect x="793.40" y="126.60" width="8.40" height="8.40" fill="#007236"/><rect x="802.20" y="125.80" width="9.60" height="9.60" fill="#161616"/><rect x="803.00" y="126.60" width="8.40" height="8.40" fill="#00746b"/><rect x="811.80" y="125.80" width="9.60" height="9.60" fill="#161616"/><rect x="812.60" y="126.60" width="8.40" height="8.40" fill="#0076a3"/><rect x="821.40" y="125.80" width="9.60" height="9.60" fill="#161616"/><rect x="822.20" y="126.60" width="8.40" height="8.40" fill="#004b80"/><rect x="831.00" y="125.80" width="9.60" height="9.60" fill="#161616"/><rect x="831.80" y="126.60" width="8.40" height="8.40" fill="#003471"/><rect x="840.60" y="125.80" width="9.60" height="9.60" fill="#161616"/><rect x="841.40" y="126.60" width="8.40" height="8.40" fill="#1b1464"/><rect x="850.20" y="125.80" width="9.60" height="9.60" fill="#161616"/><rect x="851.00" y="126.60" width="8.40" height="8.40" fill="#440e62"/><rect x="859.80" y="125.80" width="9.60" height="9.60" fill="#161616"/><rect x="860.60" y="126.60" width="8.40" height="8.40" fill="#630460"/><rect x="869.40" y="125.80" width="9.60" height="9.60" fill="#161616"/><rect x="870.20" y="126.60" width="8.40" height="8.40" fill="#9e005d"/><rect x="879.00" y="125.80" width="9.60" height="9.60" fill="#161616"/><rect x="879.80" y="126.60" width="8.40" height="8.40" fill="#9e0039"/><rect x="888.60" y="125.80" width="9.60" height="9.60" fill="#161616"/><rect x="889.40" y="126.60" width="8.40" height="8.40" fill="#790000"/><rect x="898.20" y="125.80" width="9.60" height="9.60" fill="#161616"/><rect x="899.00" y="126.60" width="8.40" height="8.40" fill="#7b2e00"/><rect x="907.80" y="125.80" width="9.60" height="9.60" fill="#161616"/><rect x="908.60" y="126.60" width="8.40" height="8.40" fill="#7d4900"/><rect x="917.40" y="125.80" width="9.60" height="9.60" fill="#161616"/><rect x="918.20" y="126.60" width="8.40" height="8.40" fill="#827b00"/><rect x="927.00" y="125.80" width="9.60" height="9.60" fill="#161616"/><rect x="927.80" y="126.60" width="8.40" height="8.40" fill="#406618"/><rect x="936.60" y="125.80" width="9.60" height="9.60" fill="#161616"/><rect x="937.40" y="126.60" width="8.40" height="8.40" fill="#005e20"/><rect x="946.20" y="125.80" width="9.60" height="9.60" fill="#161616"/><rect x="947.00" y="126.60" width="8.40" height="8.40" fill="#005826"/><rect x="955.80" y="125.80" width="9.60" height="9.60" fill="#161616"/><rect x="956.60" y="126.60" width="8.40" height="8.40" fill="#005952"/><rect x="965.40" y="125.80" width="9.60" height="9.60" fill="#161616"/><rect x="966.20" y="126.60" width="8.40" height="8.40" fill="#005b7f"/><rect x="975.00" y="125.80" width="9.60" height="9.60" fill="#161616"/><rect x="975.80" y="126.60" width="8.40" height="8.40" fill="#003663"/><rect x="984.60" y="125.80" width="9.60" height="9.60" fill="#161616"/><rect x="985.40" y="126.60" width="8.40" height="8.40" fill="#002157"/><rect x="994.20" y="125.80" width="9.60" height="9.60" fill="#161616"/><rect x="995.00" y="126.60" width="8.40" height="8.40" fill="#0d004c"/><rect x="744.60" y="135.40" width="9.60" height="9.60" fill="#161616"/><rect x="745.40" y="136.20" width="8.40" height="8.40" fill="#32004b"/><rect x="754.20" y="135.40" width="9.60" height="9.60" fill="#161616"/><rect x="755.00" y="136.20" width="8.40" height="8.40" fill="#4b0049"/><rect x="763.80" y="135.40" width="9.60" height="9.60" fill="#161616"/><rect x="764.60" y="136.20" width="8.40" height="8.40" fill="#7b0046"/><rect x="773.40" y="135.40" width="9.60" height="9.60" fill="#161616"/><rect x="774.20" y="136.20" width="8.40" height="8.40" fill="#7a0026"/><rect x="783.00" y="135.40" width="9.60" height="9.60" fill="#161616"/><rect x="783.80" y="136.20" width="8.40" height="8.40" fill="#c7b299"/><rect x="792.60" y="135.40" width="9.60" height="9.60" fill="#161616"/><rect x="793.40" y="136.20" width="8.40" height="8.40" fill="#998675"/><rect x="802.20" y="135.40" width="9.60" height="9.60" fill="#161616"/><rect x="803.00" y="136.20" width="8.40" height="8.40" fill="#736357"/><rect x="811.80" y="135.40" width="9.60" height="9.60" fill="#161616"/><rect x="812.60" y="136.20" width="8.40" height="8.40" fill="#534741"/><rect x="821.40" y="135.40" width="9.60" height="9.60" fill="#161616"/><rect x="822.20" y="136.20" width="8.40" height="8.40" fill="#362f2d"/><rect x="831.00" y="135.40" width="9.60" height="9.60" fill="#161616"/><rect x="831.80" y="136.20" width="8.40" height="8.40" fill="#c69c6d"/><rect x="840.60" y="135.40" width="9.60" height="9.60" fill="#161616"/><rect x="841.40" y="136.20" width="8.40" height="8.40" fill="#a67c52"/><rect x="850.20" y="135.40" width="9.60" height="9.60" fill="#161616"/><rect x="851.00" y="136.20" width="8.40" height="8.40" fill="#8c6239"/><rect x="859.80" y="135.40" width="9.60" height="9.60" fill="#161616"/><rect x="860.60" y="136.20" width="8.40" height="8.40" fill="#754c24"/><rect x="869.40" y="135.40" width="9.60" height="9.60" fill="#161616"/><rect x="870.20" y="136.20" width="8.40" height="8.40" fill="#603913"/></svg>
<svg style="position:absolute;left:1000px;top:84px" width="20" height="12"><path d="M5.8 4.3 H9.4 L7.6 6.6Z" fill="#1e1e1e"/><g fill="#6a6a6a"><rect x="10.2" y="1.8" width="6.8" height="1.3"/><rect x="10.2" y="4" width="6.8" height="1.3"/><rect x="10.2" y="6.2" width="6.8" height="1.3"/><rect x="10.2" y="8.4" width="6.8" height="1.3"/></g></svg>
<div style="left:1009px;top:101px;width:0;height:0;border-left:3.5px solid transparent;border-right:3.5px solid transparent;border-bottom:4px solid #a0a0a0;border-top:0"></div>
<svg style="position:absolute;left:0;top:0" width="1024" height="788" viewBox="0 0 1024 788"><path d="M6.5 75.1 L9.3 77.1 L6.5 79.1Z M9.7 75.1 L12.5 77.1 L9.7 79.1Z" fill="#f0f0f0"/><path d="M737.8 75.1 L735 77.1 L737.8 79.1Z M741 75.1 L738.2 77.1 L741 79.1Z" fill="#f0f0f0"/><path d="M1011.5 75.1 L1014.3 77.1 L1011.5 79.1Z M1014.7 75.1 L1017.5 77.1 L1014.7 79.1Z" fill="#f0f0f0"/><path d="M970.3 336.5 H977.3 V343.3 H970.3Z" fill="#fff"/><path d="M977.5 336 V343.6 H972" fill="none" stroke="#1a1a1a" stroke-width="1.4"/><path d="M972.5 340 H974.7 V343" fill="none" stroke="#1a1a1a" stroke-width="1.3"/><path d="M993 337.3 H999.5 L999 344 H993.5Z" fill="#eeeeee" stroke="#8a8a8a" stroke-width="0.8"/><rect x="994.3" y="335.6" width="4" height="1.4" fill="#8a8a8a"/><path d="M995 338.5 V343 M997.3 338.5 V343" stroke="#aaa" stroke-width="0.6"/><path d="M1011 344 L1018 337 V344Z" fill="#c6c6c6"/><path d="M1012 343.5 L1017.5 338 M1014 343.5 L1017.5 340 M1016 343.5 L1017.5 342" stroke="#f0f0f0" stroke-width="0.7"/><path d="M1009 323.5 H1016 L1012.5 327Z" fill="#a0a0a0"/><path d="M1005.8 355.3 H1009.4 L1007.6 357.6Z" fill="#1e1e1e"/><g fill="#6a6a6a"><rect x="1010.2" y="352.8" width="6.8" height="1.3"/><rect x="1010.2" y="355" width="6.8" height="1.3"/><rect x="1010.2" y="357.2" width="6.8" height="1.3"/><rect x="1010.2" y="359.4" width="6.8" height="1.3"/></g><path d="M1005.8 526.3 H1009.4 L1007.6 528.6Z" fill="#1e1e1e"/><g fill="#6a6a6a"><rect x="1010.2" y="523.8" width="6.8" height="1.3"/><rect x="1010.2" y="526" width="6.8" height="1.3"/><rect x="1010.2" y="528.2" width="6.8" height="1.3"/><rect x="1010.2" y="530.4" width="6.8" height="1.3"/></g><rect x="905" y="366.5" width="23.5" height="16" fill="#fff" stroke="#c6c6c6" stroke-width="1"/><rect x="913" y="367.5" width="1" height="14" fill="#e6e6e6"/><path d="M919.5 374.3 H925 L922.25 377.3Z" fill="#8e8e8e"/><rect x="905" y="385.6" width="34.5" height="1.1" fill="#a9a9a9"/><rect x="905" y="390.5" width="13.5" height="14.5" fill="#fff" stroke="#b2b2b2" stroke-width="1"/><path d="M910 397 H915 L912.5 400Z" fill="#8e8e8e"/><rect x="905" y="408.8" width="13.5" height="14.5" fill="#fff" stroke="#b2b2b2" stroke-width="1"/><path d="M910 415.3 H915 L912.5 418.3Z" fill="#8e8e8e"/><rect x="905" y="426.5" width="34.5" height="1.1" fill="#a9a9a9"/><rect x="905" y="464" width="34.5" height="1.1" fill="#a9a9a9"/><rect x="905" y="488" width="34.5" height="1.1" fill="#a9a9a9"/><rect x="905" y="496.3" width="43" height="13" fill="#fff" stroke="#c6c6c6" stroke-width="1"/><rect x="933.5" y="497" width="1" height="11.5" fill="#e6e6e6"/><path d="M939.5 502 H945 L942.25 505Z" fill="#8e8e8e"/><rect x="743" y="552.2" width="277" height="1.1" fill="#b6b6b6"/><rect x="743" y="573" width="277" height="1.1" fill="#b6b6b6"/><rect x="974" y="536.5" width="42.5" height="13" rx="1" fill="#dedede" stroke="#c2c2c2" stroke-width="1"/><rect x="1003.5" y="537.0" width="12.5" height="12" fill="#ececec"/><path d="M1008.5 540.5 L1011 543.0 L1008.5 545.5Z" fill="#555"/><rect x="974" y="557.3" width="42.5" height="13" rx="1" fill="#dedede" stroke="#c2c2c2" stroke-width="1"/><rect x="1003.5" y="557.8" width="12.5" height="12" fill="#ececec"/><path d="M1008.5 561.3 L1011 563.8 L1008.5 566.3Z" fill="#555"/><path d="M1009 584 H1016 L1012.5 580.5Z" fill="#a0a0a0"/><path d="M1009 761 H1016 L1012.5 764.5Z" fill="#a0a0a0"/><g fill="none" stroke="#444" stroke-width="1.2"><rect x="859.5" y="772.5" width="6.5" height="4.8" rx="2.4"/><rect x="865.5" y="772.5" width="7" height="4.8" rx="2.4"/></g><rect x="904.5" y="771.5" width="10.5" height="9" fill="#f4f4f4" stroke="#555" stroke-width="0.9"/><circle cx="909.7" cy="776" r="2.6" fill="#fff" stroke="#666" stroke-width="0.8"/><circle cx="932" cy="776" r="4.2" fill="#ddd" stroke="#555" stroke-width="0.9"/><path d="M928.8 778.8 L935 772.8 A4.2 4.2 0 0 1 928.8 778.8Z" fill="#555"/><rect x="938" y="779" width="1" height="1" fill="#555"/><path d="M948.5 772 H952 L953 773 H957.5 V779.5 H948.5Z" fill="#f2f2f2" stroke="#555" stroke-width="0.9"/><path d="M971 772.3 H978.6 V780 H971Z" fill="#fff"/><path d="M978.8 771.8 V780.3 H973" fill="none" stroke="#1a1a1a" stroke-width="1.4"/><path d="M973.5 776.3 H975.8 V780" fill="none" stroke="#1a1a1a" stroke-width="1.3"/><path d="M993.5 773 H1000.5 L999.8 781 H994.2Z" fill="#eeeeee" stroke="#8a8a8a" stroke-width="0.8"/><rect x="995" y="771.3" width="4" height="1.4" fill="#8a8a8a"/><path d="M995.8 774.5 V780 M998.2 774.5 V780" stroke="#aaa" stroke-width="0.6"/></svg>
<div class="t" style="left:883px;top:770.5px;font-size:11px;color:#444;font-weight:normal;font-family:"Liberation Serif",serif"><i>fx</i></div>
<div class="t" style="left:909px;top:473px;font-size:10.5px;color:#222;font-weight:bold;font-family:"Liberation Serif",serif">&#358;</div>
<div class="t" style="right:52.3px;top:537.5px;font-size:9.8px;color:#a4a4a4;transform:scaleX(0.9);transform-origin:100% 0">Непрозрачность:</div>
<div class="t" style="right:52.3px;top:558.5px;font-size:9.8px;color:#a4a4a4;transform:scaleX(0.9);transform-origin:100% 0">Заливка:</div>
<div style="left:61px;top:161px;width:849px;height:539px;background:linear-gradient(#3c3c3c,#1f4b60 30px);border-radius:6px 6px 0 0"></div>
<div style="left:62px;top:162px;width:847px;height:537px;background:#ececec;border-radius:5px 5px 0 0"></div>
<div style="left:62px;top:162px;width:847px;height:19px;background:linear-gradient(#d3e0ef,#b6cde7);border-radius:5px 5px 0 0"></div>
<div class="t" style="left:67.3px;top:166.8px;font-size:9.6px;color:#111;font-weight:normal;-webkit-text-stroke:0.15px #111">Установки</div>
<div style="left:881px;top:165px;width:25px;height:14px;background:linear-gradient(#f3c1b3,#e9a595 40%,#cd5a3e 50%,#c8502f 72%,#e49a88);border:1px solid #4e3c46;border-radius:2.5px"></div>
<svg style="position:absolute;left:881px;top:165px" width="25" height="14"><path d="M9.8 4 L15.2 9.6 M15.2 4 L9.8 9.6" stroke="#4a2c2c" stroke-width="3.2"/><path d="M9.8 4 L15.2 9.6 M15.2 4 L9.8 9.6" stroke="#fff" stroke-width="1.9"/></svg>
<div style="left:72px;top:189px;width:144px;height:501px;background:#fff;border:1px solid #a3a3a3"></div>
<div style="left:73px;top:206px;width:142px;height:14px;background:#3399ff"></div>
<div class="t" style="left:76px;top:193px;font-size:9.6px;color:#111;font-weight:normal;transform:scaleX(0.86);transform-origin:0 0;">Основные</div>
<div class="t" style="left:76px;top:209px;font-size:9.6px;color:#fff;font-weight:normal;transform:scaleX(0.86);transform-origin:0 0;">Интерфейс</div>
<div class="t" style="left:76px;top:225px;font-size:9.6px;color:#111;font-weight:normal;transform:scaleX(0.86);transform-origin:0 0;">Обработка файлов</div>
<div class="t" style="left:76px;top:241px;font-size:9.6px;color:#111;font-weight:normal;transform:scaleX(0.86);transform-origin:0 0;">Производительность</div>
<div class="t" style="left:76px;top:257px;font-size:9.6px;color:#111;font-weight:normal;transform:scaleX(0.86);transform-origin:0 0;">Курсоры</div>
<div class="t" style="left:76px;top:273px;font-size:9.6px;color:#111;font-weight:normal;transform:scaleX(0.86);transform-origin:0 0;">Прозрачность и цветовой охват</div>
<div class="t" style="left:76px;top:289px;font-size:9.6px;color:#111;font-weight:normal;transform:scaleX(0.86);transform-origin:0 0;">Единицы измерения и линейки</div>
<div class="t" style="left:76px;top:305px;font-size:9.6px;color:#111;font-weight:normal;transform:scaleX(0.86);transform-origin:0 0;">Направляющие, сетка и фрагменты</div>
<div class="t" style="left:76px;top:321px;font-size:9.6px;color:#111;font-weight:normal;transform:scaleX(0.86);transform-origin:0 0;">Внешние модули</div>
<div class="t" style="left:76px;top:337px;font-size:9.6px;color:#111;font-weight:normal;transform:scaleX(0.86);transform-origin:0 0;">Шрифты</div>
<div class="t" style="left:76px;top:353px;font-size:9.6px;color:#111;font-weight:normal;transform:scaleX(0.86);transform-origin:0 0;">3D</div>
<div class="grp" style="left:223px;top:195px;width:570px;height:137px;"></div>
<div style="left:234px;top:190px;width:52px;height:10px;background:#ececec"></div>
<div class="t" style="left:238.7px;top:190.6px;font-size:9.6px;color:#1e1e1e;font-weight:normal;">Основные</div>
<div class="t" style="left:416px;top:208px;font-size:9.8px;color:#1e1e1e;font-weight:normal;">Цвет</div>
<div class="t" style="left:517px;top:208px;font-size:9.8px;color:#1e1e1e;font-weight:normal;">Граница</div>
<div class="t" style="right:662.2px;top:227px;font-size:10.15px;color:#1e1e1e">Режим "Стандартное окно":</div>
<div class="dd" style="left:368px;top:222px;width:118px;height:17px;"></div>
<div class="t" style="left:374px;top:227px;font-size:9.8px;color:#1e1e1e;font-weight:normal;">Градации серого</div>
<div class="dd" style="left:493px;top:222px;width:86px;height:17px;"></div>
<div class="t" style="left:498px;top:227px;font-size:9.8px;color:#1e1e1e;font-weight:normal;">Тень</div>
<div style="left:476.5px;top:230px;width:0;height:0;border-left:3px solid transparent;border-right:3px solid transparent;border-top:3.6px solid #000"></div>
<div style="left:569.5px;top:230px;width:0;height:0;border-left:3px solid transparent;border-right:3px solid transparent;border-top:3.6px solid #000"></div>
<div class="t" style="right:662.2px;top:245.5px;font-size:9.95px;color:#1e1e1e">Полноэкранный вид с меню:</div>
<div class="dd" style="left:368px;top:242px;width:118px;height:17px;"></div>
<div class="t" style="left:374px;top:247px;font-size:9.8px;color:#1e1e1e;font-weight:normal;">Градации серого</div>
<div class="dd" style="left:493px;top:242px;width:86px;height:17px;"></div>
<div class="t" style="left:498px;top:247px;font-size:9.8px;color:#1e1e1e;font-weight:normal;">Тень</div>
<div style="left:476.5px;top:250px;width:0;height:0;border-left:3px solid transparent;border-right:3px solid transparent;border-top:3.6px solid #000"></div>
<div style="left:569.5px;top:250px;width:0;height:0;border-left:3px solid transparent;border-right:3px solid transparent;border-top:3.6px solid #000"></div>
<div class="t" style="right:662.2px;top:264px;font-size:9.95px;color:#1e1e1e">Целый экран:</div>
<div class="dd" style="left:368px;top:261px;width:118px;height:17px;"></div>
<div class="t" style="left:374px;top:266px;font-size:9.8px;color:#1e1e1e;font-weight:normal;">Черный</div>
<div class="dd" style="left:493px;top:261px;width:86px;height:17px;"></div>
<div class="t" style="left:498px;top:266px;font-size:9.8px;color:#1e1e1e;font-weight:normal;">Не показывать</div>
<div style="left:476.5px;top:269px;width:0;height:0;border-left:3px solid transparent;border-right:3px solid transparent;border-top:3.6px solid #000"></div>
<div style="left:569.5px;top:269px;width:0;height:0;border-left:3px solid transparent;border-right:3px solid transparent;border-top:3.6px solid #000"></div>
<div style="left:231px;top:283.5px;width:10px;height:10px;background:linear-gradient(135deg,#dcdcdc,#fafafa);border:1px solid #8f8f8f"></div>
<div class="t" style="left:244px;top:283.5px;font-size:9.9px;color:#1e1e1e;font-weight:normal;">Показывать каналы в цвете</div>
<div style="left:231px;top:299.5px;width:10px;height:10px;background:linear-gradient(135deg,#dcdcdc,#fafafa);border:1px solid #8f8f8f"><svg width="8" height="8" style="position:absolute;left:0.5px;top:0.5px"><path d="M1.3 4.2 L3.2 6.3 L6.8 1" stroke="#1f3f7a" stroke-width="1.4" fill="none"/></svg></div>
<div class="t" style="left:244px;top:299.5px;font-size:9.9px;color:#1e1e1e;font-weight:normal;">Показывать цвета меню</div>
<div style="left:231px;top:315.5px;width:10px;height:10px;background:linear-gradient(135deg,#dcdcdc,#fafafa);border:1px solid #8f8f8f"><svg width="8" height="8" style="position:absolute;left:0.5px;top:0.5px"><path d="M1.3 4.2 L3.2 6.3 L6.8 1" stroke="#1f3f7a" stroke-width="1.4" fill="none"/></svg></div>
<div class="t" style="left:244px;top:315.5px;font-size:9.9px;color:#1e1e1e;font-weight:normal;">Показывать подсказки</div>
<div class="grp" style="left:223px;top:345px;width:570px;height:99px;"></div>
<div style="left:234px;top:339px;width:100px;height:10px;background:#ececec"></div>
<div class="t" style="left:239px;top:339.5px;font-size:9.7px;color:#1e1e1e;font-weight:normal;">Панели и документы</div>
<div style="left:231px;top:357px;width:10px;height:10px;background:linear-gradient(135deg,#dcdcdc,#fafafa);border:1px solid #8f8f8f"></div>
<div class="t" style="left:243.5px;top:357px;font-size:9.97px;color:#1e1e1e;font-weight:normal;">Автоматически сворачивать панели со значками</div>
<div style="left:231px;top:373px;width:10px;height:10px;background:linear-gradient(135deg,#dcdcdc,#fafafa);border:1px solid #8f8f8f"><svg width="8" height="8" style="position:absolute;left:0.5px;top:0.5px"><path d="M1.3 4.2 L3.2 6.3 L6.8 1" stroke="#1f3f7a" stroke-width="1.4" fill="none"/></svg></div>
<div class="t" style="left:243.5px;top:373px;font-size:9.97px;color:#1e1e1e;font-weight:normal;">Автопоказ скрытых панелей</div>
<div style="left:231px;top:389px;width:10px;height:10px;background:linear-gradient(135deg,#dcdcdc,#fafafa);border:1px solid #8f8f8f"><svg width="8" height="8" style="position:absolute;left:0.5px;top:0.5px"><path d="M1.3 4.2 L3.2 6.3 L6.8 1" stroke="#1f3f7a" stroke-width="1.4" fill="none"/></svg></div>
<div class="t" style="left:243.5px;top:389px;font-size:9.97px;color:#1e1e1e;font-weight:normal;">Открыть документы во вкладках</div>
<div style="left:231px;top:405px;width:10px;height:10px;background:linear-gradient(135deg,#dcdcdc,#fafafa);border:1px solid #8f8f8f"><svg width="8" height="8" style="position:absolute;left:0.5px;top:0.5px"><path d="M1.3 4.2 L3.2 6.3 L6.8 1" stroke="#1f3f7a" stroke-width="1.4" fill="none"/></svg></div>
<div class="t" style="left:243.5px;top:405px;font-size:9.97px;color:#1e1e1e;font-weight:normal;">Включить закрепление окон незакрепленных документов</div>
<div class="btn" style="left:231px;top:422px;width:219px;height:15px;"></div>
<div class="t" style="left:239px;top:424.5px;font-size:9.85px;color:#1e1e1e;font-weight:normal;">Восстановить рабочие среды по умолчанию</div>
<div class="grp" style="left:223px;top:458px;width:570px;height:90px;"></div>
<div style="left:234px;top:453px;width:240px;height:10px;background:#ececec"></div>
<div class="t" style="left:238.5px;top:453px;font-size:9.8px;color:#1e1e1e;font-weight:normal;">Параметры текста пользовательского интерфейса</div>
<div class="t" style="right:662px;top:473px;font-size:9.8px;color:#1e1e1e">Язык интерфейса:</div>
<div class="t" style="right:662px;top:496px;font-size:9.8px;color:#1e1e1e">Размер шрифта меню:</div>
<div style="left:365px;top:470px;width:75px;height:17px;background:#fff;border:1px solid #7a9cc0"></div>
<div class="t" style="left:370px;top:474px;font-size:9.8px;color:#1e1e1e;font-weight:normal;">Русский</div>
<div style="left:427px;top:470.5px;width:12px;height:15.5px;background:linear-gradient(#cfe6f7,#9fcbed);border-left:1px solid #5c8fbf"></div>
<div style="left:430px;top:477px;width:0;height:0;border-left:3px solid transparent;border-right:3px solid transparent;border-top:4px solid #000"></div>
<div style="left:366px;top:486px;width:74px;height:28px;background:#fff;border:1px solid #646464;box-shadow:2px 2px 2px rgba(0,0,0,0.25)"></div>
<div style="left:367px;top:487px;width:72px;height:13px;background:#3399ff"></div>
<div class="t" style="left:369px;top:489px;font-size:9.8px;color:#fff;font-weight:normal;">Английский</div>
<div class="t" style="left:369px;top:502px;font-size:9.8px;color:#1e1e1e;font-weight:normal;">Русский</div>
<svg style="position:absolute;left:426px;top:496px" width="12" height="16" viewBox="0 0 12 16"><path d="M1.5 1 V12 L4 9.8 L6 14 L7.8 13.2 L5.9 9.2 L9.2 9.2Z" fill="#fff" stroke="#111" stroke-width="1" stroke-linejoin="round"/></svg>
<svg style="position:absolute;left:228px;top:514px" width="30" height="30" viewBox="0 0 30 30">
<defs><radialGradient id="ig" cx="0.38" cy="0.3" r="0.75"><stop offset="0" stop-color="#ffffff"/><stop offset="0.55" stop-color="#dde8f3"/><stop offset="0.85" stop-color="#9fb6d0"/><stop offset="1" stop-color="#6d8aae"/></radialGradient></defs>
<path d="M15.2 3 C8.2 3 2.5 7.3 2.5 13 C2.5 17.8 6.3 21.6 12.6 22.8 L16.5 27 L18.2 22.7 C23.8 21.3 27.8 17.6 27.8 13 C27.8 7.3 22.2 3 15.2 3Z" fill="url(#ig)" stroke="#8aa2bf" stroke-width="0.7"/>
<circle cx="14.6" cy="5.7" r="1.9" fill="#0e2a78"/>
<path d="M11.6 9.6 L16.4 9.3 L16.4 17.6 L18 17.9 L18 19 L11.6 19 L11.6 17.9 L13.2 17.6 L13.2 11.2 L11.6 10.9Z" fill="#0e2a78"/>
</svg>
<div class="t" style="left:262.5px;top:517px;font-size:9.8px;color:#1e1e1e;font-weight:normal;">Изм. вступят в силу при</div>
<div class="t" style="left:262.5px;top:528px;font-size:9.8px;color:#1e1e1e;font-weight:normal;">след. запуске Photoshop.</div>
<div style="left:806px;top:190px;width:92px;height:15px;background:linear-gradient(#eaf6fd,#d9f0fc 50%,#bee6fd 51%,#a7d9f5);border:1px solid #3c7fb1;border-radius:3px;box-shadow:inset 0 0 0 1px #94d2f4"></div>
<div class="t" style="left:845px;top:192.5px;font-size:10px;color:#1e1e1e;font-weight:normal;">OK</div>
<div class="btn" style="left:806px;top:212px;width:92px;height:15px;"></div>
<div class="t" style="left:835px;top:214.5px;font-size:10px;color:#1e1e1e;font-weight:normal;">Отмена</div>
<div class="btn" style="left:806px;top:235px;width:92px;height:15px;"></div>
<div class="t" style="left:838px;top:237.5px;font-size:10px;color:#1e1e1e;font-weight:normal;">Назад</div>
<div class="btn" style="left:806px;top:257px;width:92px;height:15px;"></div>
<div class="t" style="left:836px;top:259.5px;font-size:10px;color:#1e1e1e;font-weight:normal;">Вперед</div></body></html>
